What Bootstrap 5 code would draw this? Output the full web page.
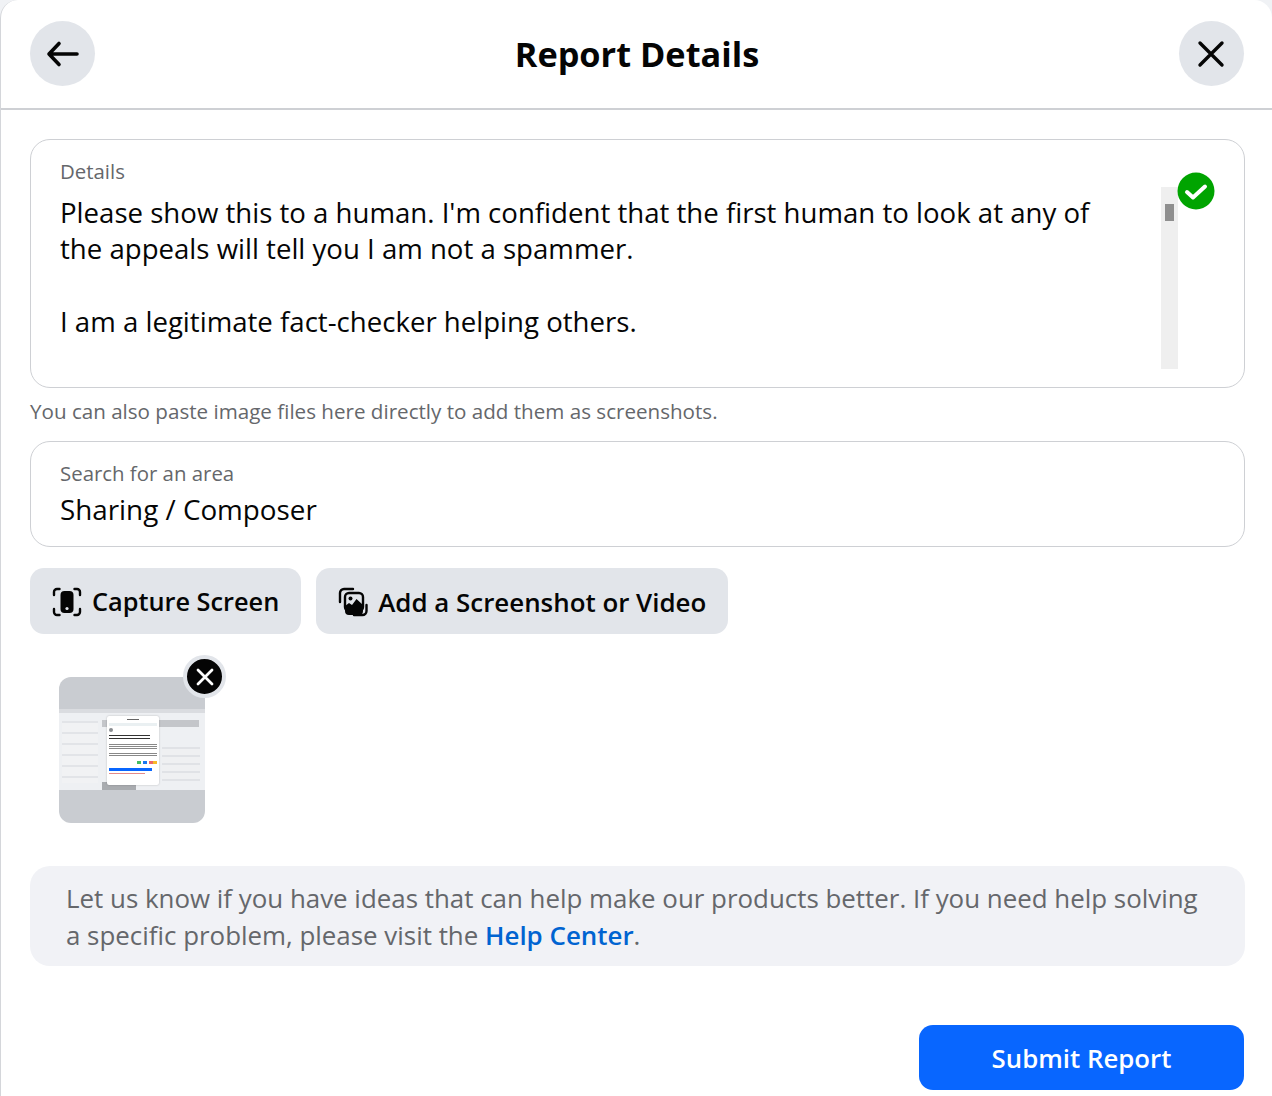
<!DOCTYPE html>
<html lang="en">
<head>
  <meta charset="UTF-8">
  <title>Report Details</title>
  <link rel="stylesheet" href="https://cdn.jsdelivr.net/npm/bootstrap@5.3.0/dist/css/bootstrap.min.css">
  <style>
    html, body { height: 1096px; overflow: hidden; background: #f0f2f5; }
    body { font-family: "Open Sans", "Noto Sans", sans-serif; color: #050505; }
    .sheet { height: 1096px; background: #fff; border-left: 1px solid #d4d6da; border-radius: 18px 18px 0 0; }
    .sheet-head { height: 110px; padding: 21px 28px 0 29px; border-bottom: 2px solid #ced0d4; }
    .sheet-title { font-size: 34.3px; font-weight: 700; line-height: 66px; }
    .round-btn { width: 65px; height: 65px; background: #e2e5ea; border: 0; border-radius: 50%; padding: 0; }
    .sheet-main { padding: 29px 27px 0 29px; }
    .field-box { border: 1px solid #ced0d4; border-radius: 20px; padding-left: 29px; }
    .details-box { height: 249px; padding-top: 18px; }
    .field-label { font-size: 20.4px; line-height: 27px; color: #65676b; }
    .details-text { font-size: 27.6px; line-height: 36.4px; width: 1060px; margin-top: 9px; }
    .fake-scroll { position: absolute; top: 47px; right: 66px; width: 17px; height: 182px; background: #efefef; }
    .fake-thumb { position: absolute; top: 17px; left: 4px; width: 9px; height: 17px; background: #8f8f8f; }
    .ok-mark { position: absolute; top: 32px; right: 29px; }
    .hint-text { font-size: 20.6px; line-height: 27px; color: #65676b; margin: 10px 0 16px; }
    .search-box { height: 106px; padding-top: 18px; }
    .search-text { font-size: 27.8px; line-height: 36px; margin-top: 4px; }
    .action-row { margin-top: 21px; gap: 15px; }
    .grey-btn { height: 66px; background: #e2e5ea; border: 0; border-radius: 14px; font-weight: 600; color: #050505; padding: 2px 22px 0; gap: 10px; }
    .capture-btn { font-size: 25.3px; }
    .upload-btn { font-size: 25.9px; }
    .thumb-wrap { width: 146px; height: 146px; margin: 43px 0 0 29px; background: #c9ccd1; border-radius: 12px; }
    .thumb-shot { position: absolute; top: 32px; left: 0; width: 146px; height: 81px; background: #eef0f3; overflow: hidden; filter: blur(.6px); }
    .shot-bar { height: 4px; background: #dadce0; }
    .shot-cover { position: absolute; top: 11px; left: 43px; width: 97px; height: 7px; background: #c4c6ca; }
    .shot-side { position: absolute; top: 12px; left: 3px; width: 36px; height: 62px; background: repeating-linear-gradient(#e2e4e8 0 2px, #f1f2f4 2px 11px); }
    .shot-right { position: absolute; top: 38px; right: 5px; width: 38px; height: 34px; background: repeating-linear-gradient(#e0e2e6 0 2px, #eff0f2 2px 8px); }
    .shot-lower { position: absolute; bottom: 0; left: 43px; width: 34px; height: 8px; background: #a9acb0; }
    .shot-modal { position: absolute; top: 7px; left: 48px; width: 52px; height: 69px; background: #fff; border-radius: 2px; box-shadow: 0 0 2px rgba(0,0,0,.25); padding: 2px 2px 0; }
    .shot-head { height: 1px; width: 12px; background: #666; margin: 1px auto 3px; }
    .shot-search { height: 3px; background: #eaf0f2; margin-bottom: 2px; }
    .shot-user { width: 4px; height: 4px; border-radius: 50%; background: #8a8d91; margin-bottom: 3px; }
    .shot-line { height: 1px; background: #333; margin-bottom: 2px; width: 85%; }
    .shot-line.pale { background: #888; width: 100%; margin-bottom: 1px; }
    .shot-gap { height: 3px; }
    .shot-dots { height: 3px; margin: 5px 0 4px 28px; width: 20px; background: linear-gradient(90deg, #45bd62 0 20%, #fff 20% 30%, #1877f2 30% 50%, #fff 50% 60%, #e66 60% 80%, #f7b928 80%); }
    .shot-blue { height: 3px; width: 43px; background: #0866ff; }
    .shot-red { height: 1px; background: #e58a8a; margin-top: 2px; width: 36px; }
    .thumb-remove { position: absolute; top: -22px; right: -21px; width: 43px; height: 43px; background: #050505; border: 4px solid #e2e5ea; border-radius: 50%; padding: 0; display: flex; align-items: center; justify-content: center; }
    .info-box { height: 100px; margin-top: 43px; background: #f1f2f6; border-radius: 20px; padding: 14px 36px; font-size: 25.9px; line-height: 37px; color: #65676b; }
    .info-box a { color: #0064d1; font-weight: 600; text-decoration: none; }
    .submit-row { margin-top: 59px; padding-right: 1px; }
    .submit-btn { width: 325px; height: 65px; background: #0866ff; border: 0; border-radius: 14px; font-size: 25.8px; font-weight: 600; color: #fff; padding-top: 2px; }
  </style>
</head>
<body>
  <div class="sheet">
    <div class="sheet-head d-flex justify-content-between align-items-start">
      <button class="round-btn d-flex align-items-center justify-content-center">
        <svg width="34" height="28" viewBox="0 0 34 28" fill="none" stroke="#050505" stroke-width="3.6" stroke-linecap="round" stroke-linejoin="round"><path d="M31 14H3M13 3.5 3 14l10 10.5"/></svg>
      </button>
      <div class="sheet-title">Report Details</div>
      <button class="round-btn d-flex align-items-center justify-content-center">
        <svg width="28" height="28" viewBox="0 0 28 28" fill="none" stroke="#050505" stroke-width="3.4" stroke-linecap="round"><path d="M3 3l22 22M25 3 3 25"/></svg>
      </button>
    </div>
    <div class="sheet-main">
      <div class="field-box details-box position-relative">
        <div class="field-label">Details</div>
        <div class="details-text">Please show this to a human. I'm confident that the first human to look at any of the appeals will tell you I am not a spammer.<br><br>I am a legitimate fact-checker helping others.</div>
        <div class="fake-scroll"><div class="fake-thumb"></div></div>
        <svg class="ok-mark" width="38" height="38" viewBox="0 0 38 38"><circle cx="19" cy="19" r="18.5" fill="#00a400"/><path d="M10 20l6 5.5 12-11" fill="none" stroke="#fff" stroke-width="4" stroke-linecap="round" stroke-linejoin="round"/></svg>
      </div>
      <div class="hint-text">You can also paste image files here directly to add them as screenshots.</div>
      <div class="field-box search-box">
        <div class="field-label">Search for an area</div>
        <div class="search-text">Sharing / Composer</div>
      </div>
      <div class="action-row d-flex">
        <button class="grey-btn capture-btn d-flex align-items-center">
          <svg width="30" height="30" viewBox="0 0 30 30" fill="none"><path d="M2 8V5a3 3 0 0 1 3-3h2.500M22.500 2H25a3 3 0 0 1 3 3v3M28 22v3a3 3 0 0 1-3 3h-2.500M7.500 28H5a3 3 0 0 1-3-3v-3" stroke="#050505" stroke-width="2.400" stroke-linecap="round"/><rect x="8.500" y="4" width="13" height="22" rx="4" fill="#050505"/><circle cx="15" cy="21.500" r="1.600" fill="#e2e5ea"/></svg>
          Capture Screen
        </button>
        <button class="grey-btn upload-btn d-flex align-items-center">
          <svg width="30" height="30" viewBox="0 0 30 30" fill="none"><path d="M2 15V6a4 4 0 0 1 4-4h9" stroke="#050505" stroke-width="2.400" stroke-linecap="round"/><path d="M28.500 18v6a4 4 0 0 1-4 4H16" stroke="#050505" stroke-width="2.400" stroke-linecap="round"/><rect x="7" y="6" width="18" height="18" rx="4" fill="#e2e5ea" stroke="#050505" stroke-width="2.400"/><circle cx="12.500" cy="11.500" r="2" fill="#050505"/><path d="M7 19l4-3 3 2 4.500-6 6.500 6v6a4 4 0 0 1-4 4H11a4 4 0 0 1-4-4Z" fill="#050505"/></svg>
          Add a Screenshot or Video
        </button>
      </div>
      <div class="thumb-wrap position-relative">
        <div class="thumb-shot">
          <div class="shot-bar"></div>
          <div class="shot-cover"></div>
          <div class="shot-side"></div>
          <div class="shot-right"></div>
          <div class="shot-lower"></div>
          <div class="shot-modal">
            <div class="shot-head"></div>
            <div class="shot-search"></div>
            <div class="shot-user"></div>
            <div class="shot-line"></div>
            <div class="shot-line"></div>
            <div class="shot-gap"></div>
            <div class="shot-line pale"></div>
            <div class="shot-line pale"></div>
            <div class="shot-line pale"></div>
            <div class="shot-gap"></div>
            <div class="shot-line pale"></div>
            <div class="shot-line pale"></div>
            <div class="shot-dots"></div>
            <div class="shot-blue"></div>
            <div class="shot-red"></div>
          </div>
        </div>
        <button class="thumb-remove">
          <svg width="20" height="20" viewBox="0 0 20 20" fill="none" stroke="#fff" stroke-width="2.800" stroke-linecap="round"><path d="M3 3l14 14M17 3 3 17"/></svg>
        </button>
      </div>
      <div class="info-box">Let us know if you have ideas that can help make our products better. If you need help solving a specific problem, please visit the <a href="#">Help Center</a>.</div>
      <div class="submit-row d-flex justify-content-end">
        <button class="submit-btn">Submit Report</button>
      </div>
    </div>
  </div>
  <script src="https://cdn.jsdelivr.net/npm/bootstrap@5.3.0/dist/js/bootstrap.bundle.min.js"></script>
</body>
</html>
